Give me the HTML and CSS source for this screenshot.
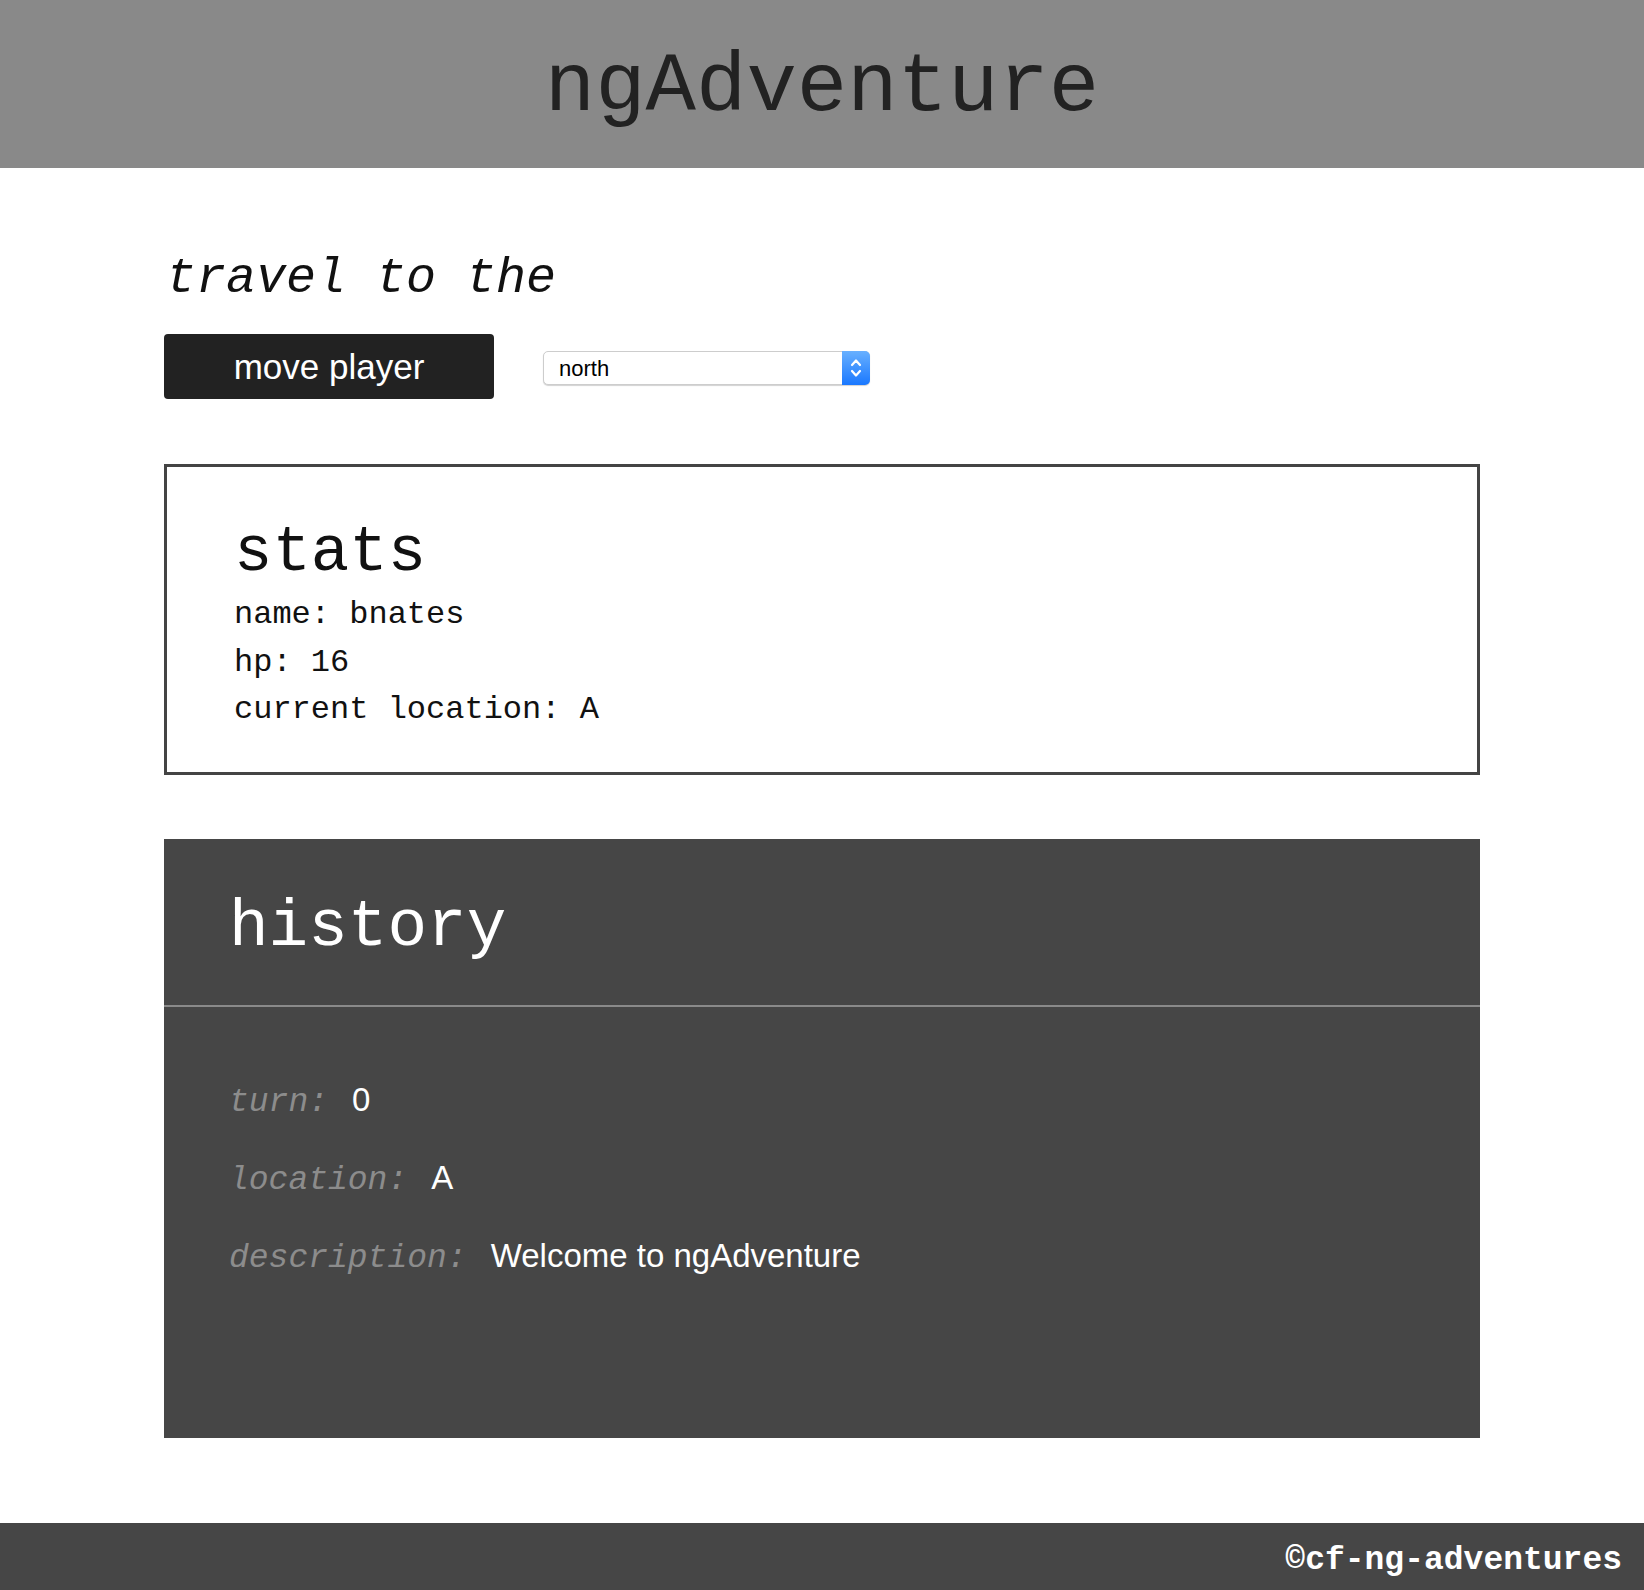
FILE: index.html
```
<!DOCTYPE html>
<html lang="en">
<head>
<meta charset="utf-8">
<title>ngAdventure</title>
<link rel="stylesheet" href="styles.css">
</head>
<body>
<header class="site-header">
  <h1 class="site-title">ngAdventure</h1>
</header>
<main class="main">
  <h2 class="travel">travel to the</h2>
  <div class="controls">
    <button class="move-btn" type="button">move player</button>
    <div class="select-wrap">
      <select class="dir-select">
        <option>north</option>
        <option>south</option>
        <option>east</option>
        <option>west</option>
      </select>
      <span class="select-arrows">
        <svg width="14" height="26" viewBox="0 0 14 26" fill="none" stroke="#fff" stroke-width="2.2" stroke-linecap="round" stroke-linejoin="round"><path d="M3 10 L7 5.5 L11 10"/><path d="M3 16 L7 20.5 L11 16"/></svg>
      </span>
    </div>
  </div>

  <section class="stats">
    <h2 class="stats-title">stats</h2>
    <p class="stat-line">name: bnates</p>
    <p class="stat-line">hp: 16</p>
    <p class="stat-line">current location: A</p>
  </section>

  <section class="history">
    <div class="history-head">
      <h2 class="history-title">history</h2>
    </div>
    <div class="history-body">
      <div class="hist-row"><span class="hist-label">turn:</span><span class="hist-value">0</span></div>
      <div class="hist-row"><span class="hist-label">location:</span><span class="hist-value">A</span></div>
      <div class="hist-row"><span class="hist-label">description:</span><span class="hist-value">Welcome to ngAdventure</span></div>
    </div>
  </section>
</main>
<footer class="site-footer">©cf-ng-adventures</footer>
</body>
</html>
```

FILE: styles.css
```
* { box-sizing: border-box; }

html, body {
  margin: 0;
  padding: 0;
}

body {
  font-family: "Liberation Mono", "Courier New", monospace;
  color: #111;
  background: #fff;
}

.site-header {
  height: 168px;
  background: #898989;
  padding-top: 8px;
}

.site-title {
  margin: 0;
  text-align: center;
  font-size: 84px;
  font-weight: normal;
  line-height: 160px;
  color: #222;
}

.main {
  width: 1316px;
  margin: 0 auto;
  padding-top: 81px;
}

.travel {
  margin: 0;
  font-size: 50px;
  font-style: italic;
  font-weight: normal;
  line-height: 60px;
  color: #111;
  padding-left: 2px;
}

.controls {
  display: flex;
  align-items: center;
  gap: 49px;
  margin-top: 25px;
}

.move-btn {
  width: 330px;
  height: 65px;
  background: #222;
  color: #fff;
  border: none;
  border-radius: 4px;
  font-family: "Liberation Sans", Arial, sans-serif;
  font-size: 35px;
  padding: 0;
  cursor: pointer;
}

.select-wrap {
  position: relative;
  width: 327px;
  height: 34px;
  margin-top: 3px;
}

.dir-select {
  -webkit-appearance: none;
  appearance: none;
  width: 100%;
  height: 34px;
  border: 1px solid #cdcdcd;
  border-radius: 5px;
  background: #fff;
  box-shadow: 0 1px 1px rgba(0, 0, 0, 0.18);
  font-family: "Liberation Sans", Arial, sans-serif;
  font-size: 22px;
  color: #000;
  padding: 0 0 0 15px;
  outline: none;
}

.select-arrows {
  position: absolute;
  top: 0;
  right: 0;
  width: 28px;
  height: 34px;
  border-radius: 0 5px 5px 0;
  background: linear-gradient(#68b0ff, #1a78ff);
  display: flex;
  align-items: center;
  justify-content: center;
  pointer-events: none;
}

.stats {
  margin-top: 65px;
  border: 3px solid #444;
  padding: 54px 40px 38px 67px;
}

.stats-title {
  margin: 0 0 6px;
  font-size: 64px;
  font-weight: normal;
  line-height: 64px;
  color: #111;
}

.stat-line {
  margin: 0;
  font-size: 32px;
  line-height: 47.5px;
  color: #111;
}

.history {
  margin-top: 64px;
  background: #464646;
  padding-bottom: 143px;
}

.history-head {
  padding: 56px 40px 44px 65px;
  border-bottom: 2px solid #8a8a8a;
}

.history-title {
  margin: 0;
  font-size: 66px;
  font-weight: normal;
  line-height: 66px;
  color: #fff;
}

.history-body {
  padding: 54px 40px 0 65px;
}

.hist-row {
  font-size: 33px;
  line-height: 78px;
  height: 78px;
}

.hist-label {
  font-style: italic;
  color: #8c8c8c;
  margin-right: 24px;
}

.hist-value {
  font-family: "Liberation Sans", Arial, sans-serif;
  color: #fff;
}

.site-footer {
  margin-top: 85px;
  height: 68px;
  background: #464646;
  color: #fff;
  font-weight: bold;
  font-size: 33px;
  line-height: 60px;
  padding: 8px 22px 0 0;
  text-align: right;
}
```
